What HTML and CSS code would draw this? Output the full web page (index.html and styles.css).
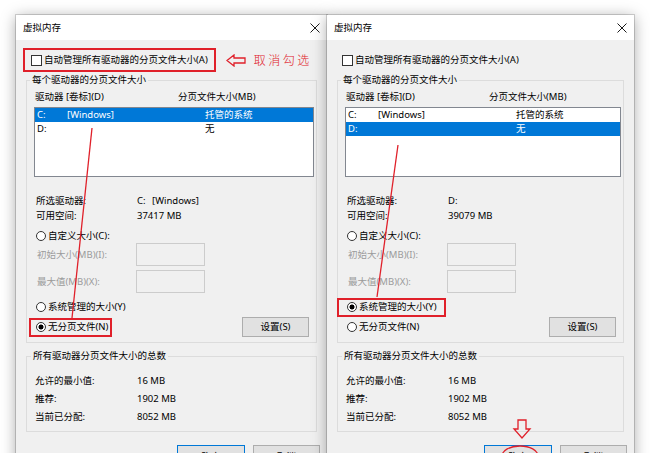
FILE: index.html
```html
<!DOCTYPE html>
<html lang="zh-CN">
<head>
    <meta charset="UTF-8">
    <title>虚拟内存</title>
    <link rel="stylesheet" href="styles.css">
</head>
<body>
<div class="desk">
    <!-- 左侧：取消自动管理，D盘设为无分页文件 -->
    <div class="win win-left">
        <div class="titlebar">
            <span>虚拟内存</span>
            <svg class="close" width="10" height="10" viewBox="0 0 10 10"><path d="M0.5 0.5L9.5 9.5M9.5 0.5L0.5 9.5" stroke="#1a1a1a" stroke-width="1"/></svg>
        </div>
        <div class="content">
            <div class="top-row">
                <label class="auto marked"><span class="check"></span>自动管理所有驱动器的分页文件大小(A)</label>
                <svg class="arrow-left" width="20" height="13" viewBox="0 0 20 13"><polygon points="1,6.5 8,1 8,4 19,4 19,9 8,9 8,12" fill="none" stroke="#e0202a" stroke-width="1.3"/></svg>
                <span class="note">取消勾选</span>
            </div>
            <fieldset class="group">
                <legend>每个驱动器的分页文件大小</legend>
                <div class="list-head"><span class="c1">驱动器 [卷标](D)</span><span>分页文件大小(MB)</span></div>
                <div class="list">
                    <div class="item sel"><span class="drv">C:</span><span class="vol">[Windows]</span><span>托管的系统</span></div>
                    <div class="item"><span class="drv">D:</span><span class="vol"></span><span>无</span></div>
                </div>
                <div class="info first"><span class="k">所选驱动器:</span><span class="drv-name">C:</span><span>[Windows]</span></div>
                <div class="info"><span class="k">可用空间:</span><span>37417 MB</span></div>
                <label class="opt custom"><span class="radio"></span>自定义大小(C):</label>
                <div class="field"><span class="k">初始大小(MB)(I):</span><span class="input"></span></div>
                <div class="field second"><span class="k">最大值(MB)(X):</span><span class="input"></span></div>
                <label class="opt sys"><span class="radio"></span>系统管理的大小(Y)</label>
                <div class="last-row">
                    <label class="opt mark"><span class="radio on"></span>无分页文件(N)</label>
                    <button class="btn set">设置(S)</button>
                </div>
            </fieldset>
            <fieldset class="group total">
                <legend>所有驱动器分页文件大小的总数</legend>
                <div class="sum"><span class="k">允许的最小值:</span><span>16 MB</span></div>
                <div class="sum"><span class="k">推荐:</span><span>1902 MB</span></div>
                <div class="sum"><span class="k">当前已分配:</span><span>8052 MB</span></div>
            </fieldset>
            <div class="actions">
                <button class="btn ok">确定</button>
                <button class="btn cancel">取消</button>
            </div>
        </div>
    </div>

    <!-- 右侧：D盘改为系统管理的大小 -->
    <div class="win win-right">
        <div class="titlebar">
            <span>虚拟内存</span>
            <svg class="close" width="10" height="10" viewBox="0 0 10 10"><path d="M0.5 0.5L9.5 9.5M9.5 0.5L0.5 9.5" stroke="#1a1a1a" stroke-width="1"/></svg>
        </div>
        <div class="content">
            <div class="top-row">
                <label class="auto"><span class="check"></span>自动管理所有驱动器的分页文件大小(A)</label>
            </div>
            <fieldset class="group">
                <legend>每个驱动器的分页文件大小</legend>
                <div class="list-head"><span class="c1">驱动器 [卷标](D)</span><span>分页文件大小(MB)</span></div>
                <div class="list">
                    <div class="item"><span class="drv">C:</span><span class="vol">[Windows]</span><span>托管的系统</span></div>
                    <div class="item sel"><span class="drv">D:</span><span class="vol"></span><span>无</span></div>
                </div>
                <div class="info first"><span class="k">所选驱动器:</span><span>D:</span></div>
                <div class="info"><span class="k">可用空间:</span><span>39079 MB</span></div>
                <label class="opt custom"><span class="radio"></span>自定义大小(C):</label>
                <div class="field"><span class="k">初始大小(MB)(I):</span><span class="input"></span></div>
                <div class="field second"><span class="k">最大值(MB)(X):</span><span class="input"></span></div>
                <label class="opt sys mark wide"><span class="radio on"></span>系统管理的大小(Y)</label>
                <div class="last-row">
                    <label class="opt"><span class="radio"></span>无分页文件(N)</label>
                    <button class="btn set">设置(S)</button>
                </div>
            </fieldset>
            <fieldset class="group total">
                <legend>所有驱动器分页文件大小的总数</legend>
                <div class="sum"><span class="k">允许的最小值:</span><span>16 MB</span></div>
                <div class="sum"><span class="k">推荐:</span><span>1902 MB</span></div>
                <div class="sum"><span class="k">当前已分配:</span><span>8052 MB</span></div>
            </fieldset>
            <div class="actions">
                <button class="btn ok">确定</button>
                <button class="btn cancel">取消</button>
            </div>
        </div>
    </div>
</div>

<!-- 红色标注：连线、下箭头、圈出确定按钮 -->
<svg class="marks" width="650" height="453" viewBox="0 0 650 453">
    <path d="M92 128L72 318" stroke="#e0202a" stroke-width="1.3" fill="none"/>
    <path d="M398 145L377 297" stroke="#e0202a" stroke-width="1.3" fill="none"/>
    <polygon points="518,420 526,420 526,429 530,429 522,438 514,429 518,429" fill="none" stroke="#e0202a" stroke-width="1.3"/>
    <ellipse cx="520" cy="456" rx="18" ry="10" fill="none" stroke="#e0202a" stroke-width="1.3"/>
</svg>
</body>
</html>
```

FILE: styles.css
```css
* {
    box-sizing: border-box;
}
html, body {
    margin: 0;
    height: 453px;
    overflow: hidden;
    background: #fff;
}
body {
    position: relative;
    font-family: "Noto Sans", "Noto Sans CJK SC", sans-serif;
    font-size: 9.5px;
    line-height: 14px;
    color: #000;
}
.desk {
    display: flex;
    align-items: flex-start;
    padding: 15px 0 0 16px;
}
.win {
    height: 470px;
    background: #f0f0f0;
    box-shadow: 0 0 0 1px rgba(0,0,0,0.16), 0 2px 14px rgba(0,0,0,0.35);
}
.win-left {
    width: 311px;
}
.win-right {
    width: 307px;
}
.titlebar {
    height: 25px;
    background: #fff;
    display: flex;
    align-items: center;
    justify-content: space-between;
    padding: 0 7px 0 7px;
}
.content {
    padding-top: 8px;
}
.top-row {
    display: flex;
    align-items: center;
    margin-left: 7px;
}
.auto {
    display: inline-flex;
    align-items: center;
    gap: 2px;
    padding: 3px 6px;
    border: 2px solid transparent;
}
.auto.marked {
    border-color: #e0202a;
}
.check {
    width: 11px;
    height: 11px;
    background: #fff;
    border: 1px solid #333;
}
.arrow-left {
    margin-left: 10px;
}
.note {
    margin-left: 8px;
    color: #e0202a;
    font-family: "Noto Sans CJK SC", sans-serif;
    font-weight: 300;
    font-size: 12px;
    letter-spacing: 2.5px;
}
.group {
    margin: 1px 10px 0;
    min-width: 0;
    border: 1px solid #dcdcdc;
    padding: 3px 2px 5px 7px;
}
.group legend {
    padding: 0 2px;
    margin-left: -4px;
    line-height: 14px;
}
.list-head {
    display: flex;
    padding-left: 1px;
}
.list-head .c1 {
    width: 143px;
}
.list {
    margin-top: 3px;
    height: 70px;
    background: #fff;
    border: 1px solid #828790;
}
.item {
    display: flex;
    height: 14px;
    padding-left: 2px;
}
.item.sel {
    background: #0078d7;
    color: #fff;
}
.drv {
    width: 30px;
}
.vol {
    width: 138px;
}
.info {
    display: flex;
    line-height: 15px;
    padding-left: 2px;
}
.info.first {
    margin-top: 16px;
}
.info .k {
    width: 101px;
}
.drv-name {
    width: 15px;
}
.opt {
    display: flex;
    align-items: center;
    gap: 2px;
    width: fit-content;
    height: 14px;
    margin-left: 2px;
}
.opt.custom {
    margin-top: 6px;
}
.opt.sys {
    margin-top: 7px;
}
.radio {
    width: 10px;
    height: 10px;
    border: 1px solid #333;
    border-radius: 50%;
    background: #fff;
}
.radio.on {
    background: radial-gradient(circle, #000 0 2.2px, #fff 2.8px);
}
.opt.mark {
    height: auto;
    border: 2px solid #e0202a;
    margin: -2px 0 -3px -5px;
    padding: 0 2px 1px 5px;
}
.opt.sys.mark {
    margin-top: 5px;
}
.opt.mark.wide {
    margin-left: -8px;
    padding: 0 7px 1px 8px;
}
.field {
    display: flex;
    align-items: center;
    height: 23px;
    padding-left: 3px;
}
.field.second {
    margin-top: 4px;
}
.field .k {
    width: 99px;
    color: #9b9b9b;
}
.input {
    width: 69px;
    height: 23px;
    border: 1px solid #cccccc;
    background: #f0f0f0;
}
.last-row {
    display: flex;
    align-items: center;
    justify-content: space-between;
    height: 20px;
    margin-top: 3px;
}
.btn {
    font: inherit;
    color: #000;
    background: #e1e1e1;
    border: 1px solid #adadad;
    padding: 0;
}
.btn.set {
    width: 67px;
    height: 20px;
    margin-right: 5px;
}
.group.total {
    margin-top: 6px;
    padding: 9px 2px 5px 8px;
}
.sum {
    display: flex;
    height: 18px;
    line-height: 18px;
}
.sum .k {
    width: 102px;
}
.actions {
    display: flex;
    justify-content: flex-end;
    gap: 8px;
    margin: 13px 7px 0 0;
}
.actions .btn {
    height: 23px;
    width: 67px;
}
.btn.ok {
    width: 68px;
    border-color: #0078d7;
}
.marks {
    position: absolute;
    top: 0;
    left: 0;
    pointer-events: none;
}
```
